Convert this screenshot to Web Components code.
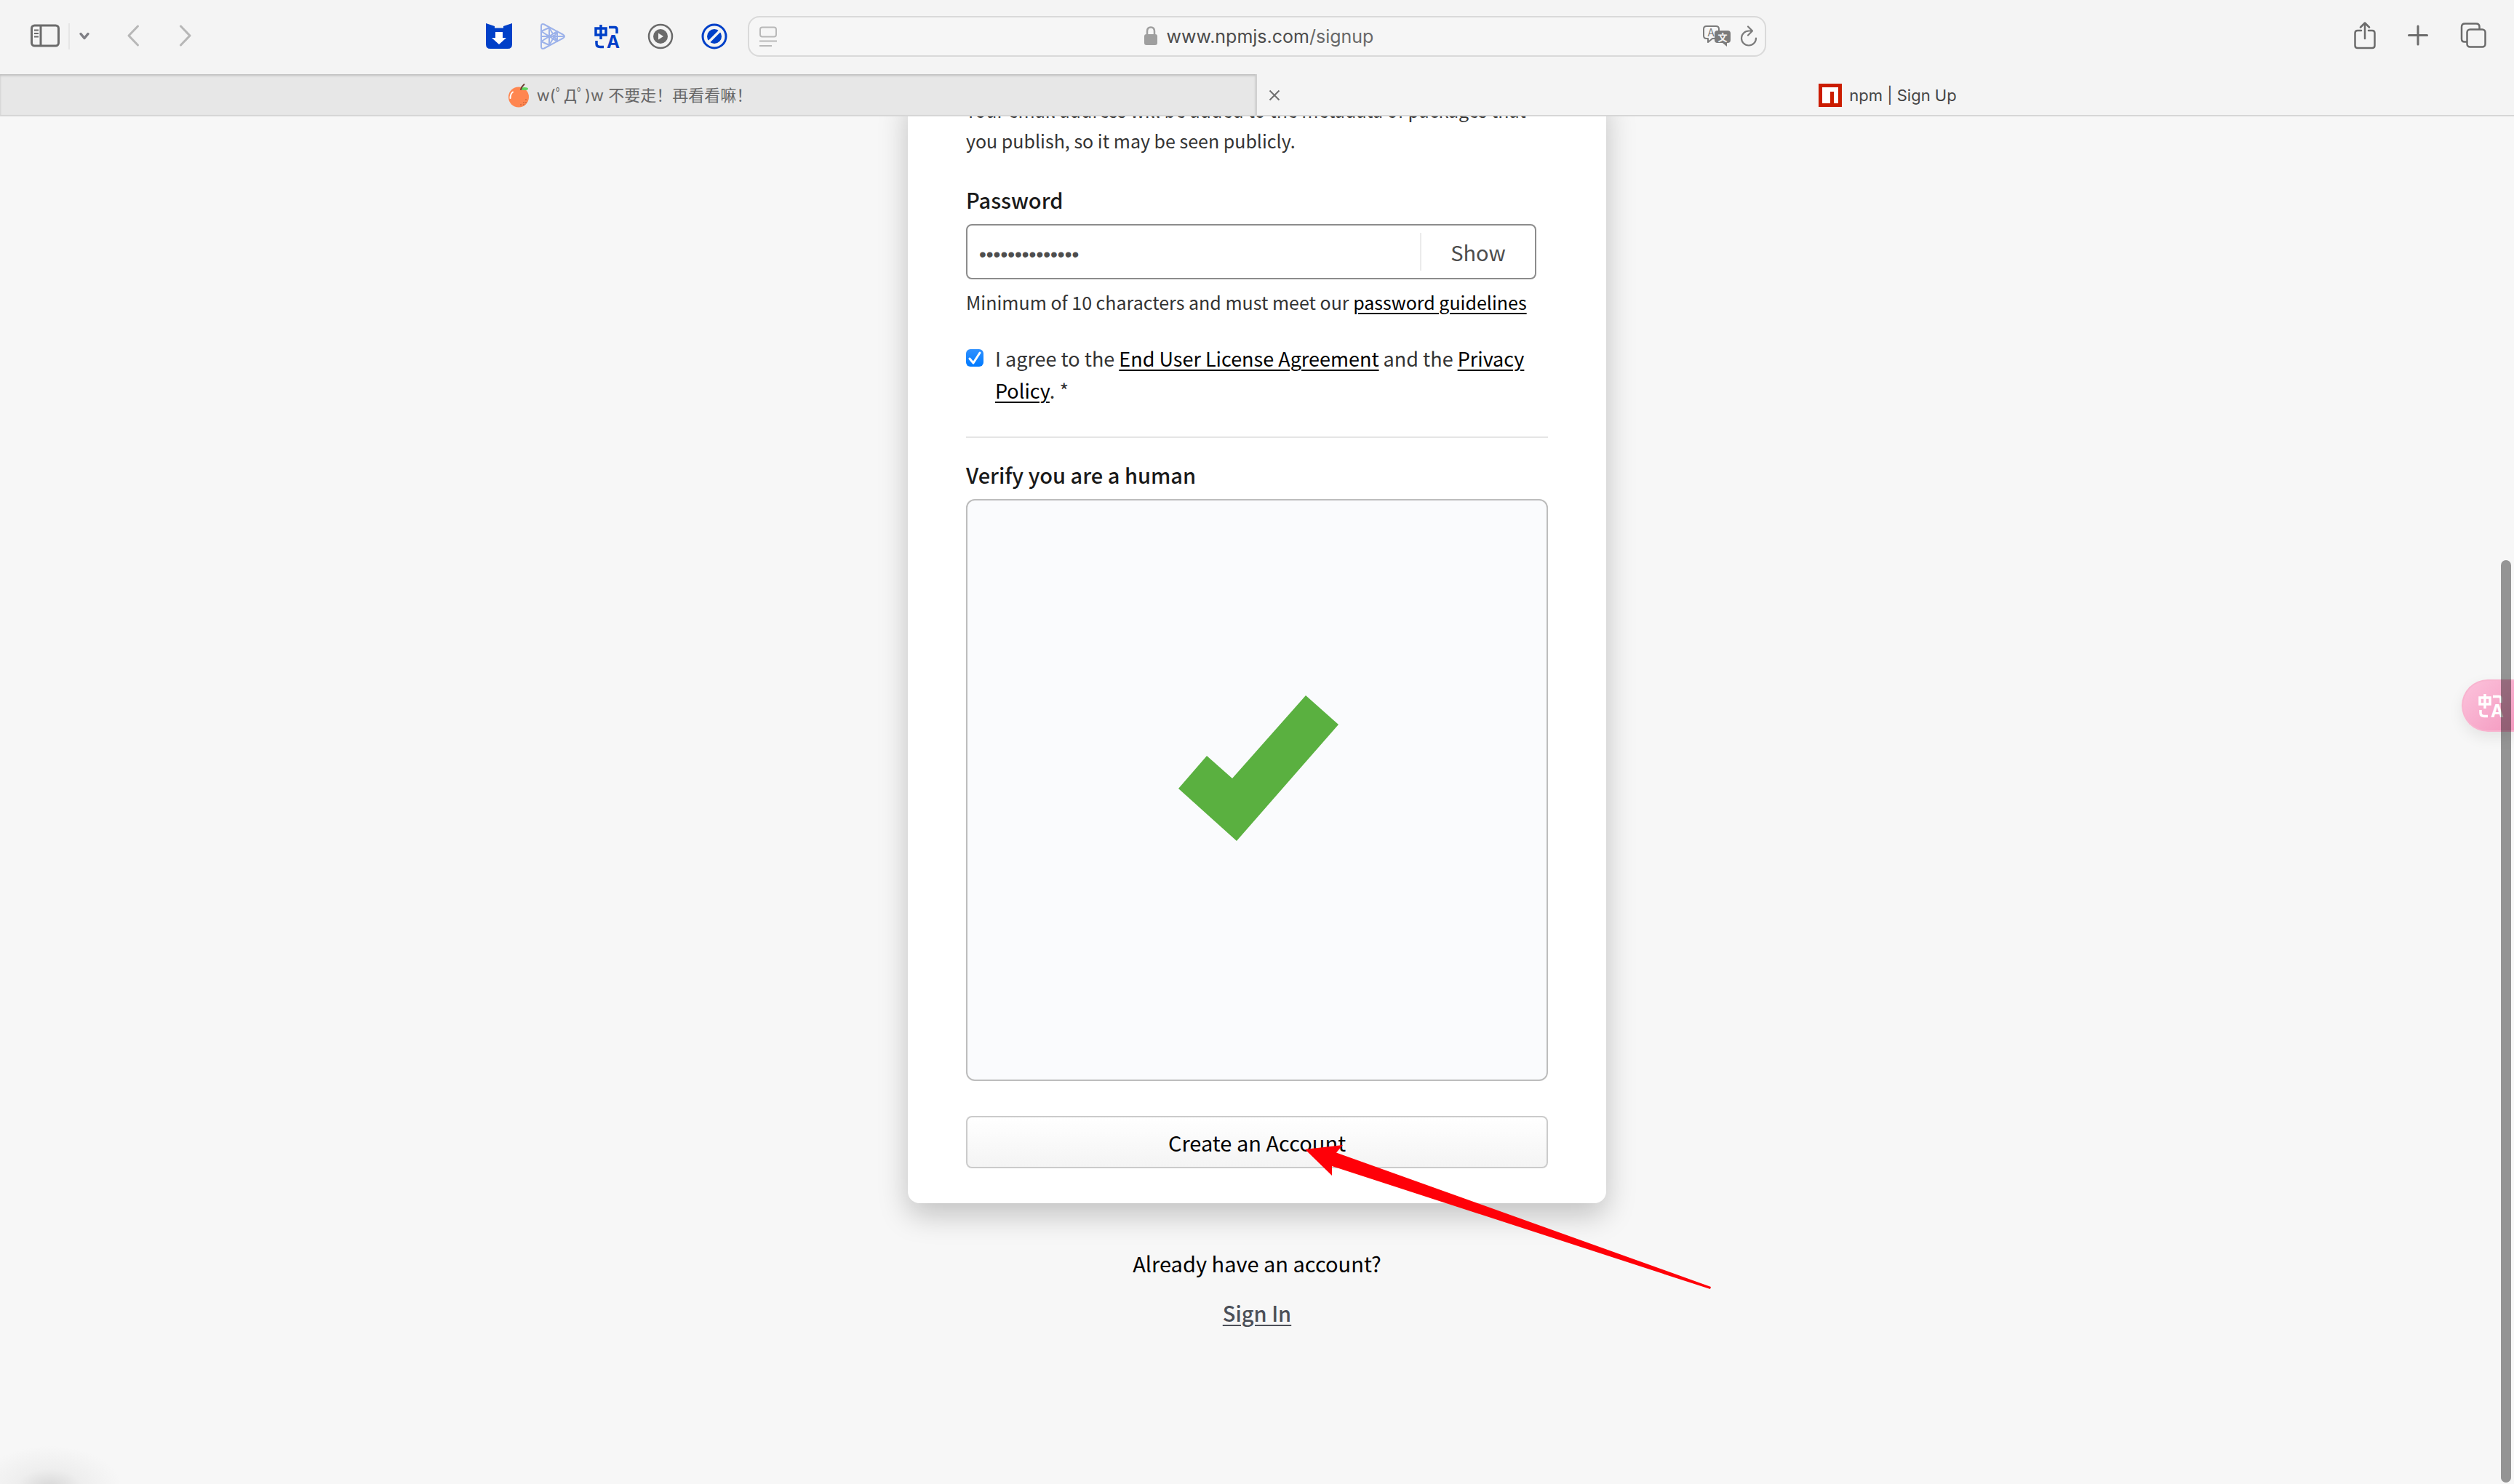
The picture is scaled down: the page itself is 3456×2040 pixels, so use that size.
<!DOCTYPE html>
<html lang="en">
<head>
<meta charset="utf-8">
<title>npm | Sign Up</title>
<style>
html, body { margin: 0; height: 100%; }
body { background: #f7f7f7; font-family: "Noto Sans CJK SC", sans-serif; color: #1a1a1a; overflow: hidden; }
</style>
</head>
<body>
<browser-window>
  <browser-toolbar slot="toolbar"></browser-toolbar>
  <tab-strip slot="tabs">
    <browser-tab><ui-icon slot="icon" name="orange"></ui-icon>w(ﾟДﾟ)w 不要走！再看看嘛！</browser-tab>
    <browser-tab active><ui-icon slot="icon" name="npm"></ui-icon>npm | Sign Up</browser-tab>
  </tab-strip>
  <signup-page></signup-page>
</browser-window>

<script>
const ICONS = {
  sidebar: [40, 40, `<g fill="none" stroke="#6b6b6b" stroke-width="3"><rect x="1.5" y="5" width="37" height="28" rx="4"/><path d="M14 5v28"/><path stroke-width="2" d="M5 11.5h6M5 16h6M5 20.500h6"/></g>`],
  down: [16, 40, `<path d="M3 16.500l5 6 5-6" fill="none" stroke="#7f7f85" stroke-width="3.500" stroke-linecap="round" stroke-linejoin="round"/>`],
  back: [18, 40, `<path d="M15.500 6L3 19l12.500 13" fill="none" stroke="#b7b7b7" stroke-width="3" stroke-linecap="round" stroke-linejoin="round"/>`],
  forward: [18, 40, `<path d="M2.500 6L15 19 2.500 32" fill="none" stroke="#b7b7b7" stroke-width="3" stroke-linecap="round" stroke-linejoin="round"/>`],
  download: [36, 40, `<path d="M0 2l12 4v2.500h12V6l12-4v29q0 6-6 6H6q-6 0-6-6z" fill="#0040c8"/><path d="M13 14h10v8h5L18 31 8 22h5z" fill="#fff"/>`],
  mesh: [36, 40, `<g fill="none" stroke="#9cb2ea" stroke-width="2" stroke-linejoin="round"><path d="M2 6q0-4 4-2.500L32 17.500q4 2.500 0 5L6 36.500Q2 38 2 34z"/><path d="M2 13l11-5v24L2 27M2 13l22 14V13L2 27M13 8l11 19M13 32L24 13M2 20h32"/></g>`],
  translate: [36, 40, `<g fill="none" stroke="currentColor" stroke-width="3.500"><rect x="3" y="9" width="14" height="9"/><path d="M10 4v20"/><path d="M21 7.500h8q3 0 3 3V16M4 26v4q0 4.500 5 4.500h5"/></g><text x="27" y="36" text-anchor="middle" font-family="Inter, sans-serif" font-weight="700" font-size="24" fill="currentColor">A</text>`],
  play: [36, 40, `<g fill="none" stroke="#6a6a6a" stroke-width="2.500"><circle cx="18" cy="20" r="16"/></g><circle cx="18" cy="20" r="10" fill="#6a6a6a"/><path d="M15 15.500v9l7-4.500z" fill="#f4f4f4"/>`],
  block: [36, 40, `<circle cx="18" cy="20" r="16" fill="none" stroke="#0040c8" stroke-width="3"/><circle cx="18" cy="20" r="10" fill="#0040c8"/><path d="M10 28l16-16" stroke="#f4f4f4" stroke-width="3.500"/>`],
  reader: [24, 32, `<g fill="none" stroke="#b8b8b8" stroke-width="2"><rect x="1" y="3.500" width="22" height="13" rx="3"/><path d="M0 22.500h24M0 29h17"/></g>`],
  lock: [20, 32, `<path d="M5 14V9q0-5.500 5-5.500T15 9v5" fill="none" stroke="#9f9f9f" stroke-width="2.500"/><rect x="1" y="13" width="18" height="15" rx="3" fill="#9f9f9f"/>`],
  speech: [38, 32, `<path d="M17 19h-4l-6 5v-5H5q-4 0-4-4V6q0-4 4-4h13q4 0 4 4v2" fill="none" stroke="#7b7b7b" stroke-width="2" stroke-linejoin="round"/><path d="M20 8h14q4 0 4 4v9q0 4-4 4h-1v5l-6-5h-7q-4 0-4-4v-9q0-4 4-4z" fill="#7b7b7b"/><text x="11" y="16" text-anchor="middle" font-family="Inter, sans-serif" font-size="14" fill="#7b7b7b">A</text><text x="27" y="22" text-anchor="middle" font-family="'Noto Sans CJK SC', sans-serif" font-weight="700" font-size="13" fill="#f4f4f4">文</text>`],
  reload: [24, 32, `<g fill="none" stroke="#7b7b7b" stroke-width="2.200" stroke-linecap="round" stroke-linejoin="round"><path d="M22 18.500a10 10 0 1 1-10-10h4.500M11 2.500l6 6-6 6"/></g>`],
  share: [30, 40, `<g fill="none" stroke="#6b6b6b" stroke-width="2.500" stroke-linecap="round" stroke-linejoin="round"><path d="M10 12H5q-3.500 0-3.500 3.500v17Q1.500 36 5 36h20q3.500 0 3.500-3.500v-17Q28.500 12 25 12h-5M15 23V2M9 7.500L15 1.500l6 6"/></g>`],
  plus: [28, 40, `<path d="M1.500 18.500h25M14 6v25" fill="none" stroke="#6b6b6b" stroke-width="3" stroke-linecap="round"/>`],
  overview: [36, 40, `<g fill="none" stroke="#6b6b6b" stroke-width="2.500"><rect x="9.500" y="10.500" width="25" height="24" rx="4"/><path d="M9.500 27.500H6q-4 0-4-4V7q0-4.500 4.500-4.500H22q4.500 0 4.500 4.500v3.500"/></g>`],
  close: [16, 16, `<path d="M1.500 1.500l13 13M14.500 1.500l-13 13" stroke="#6f6f6f" stroke-width="2"/>`],
  npm: [32, 32, `<path fill="#cb1c00" d="M0 0h32v32H0z"/><path fill="#fff" d="M5 5h22v22h-6V11h-5v16H5z"/>`],
  orange: [30, 34, `<ellipse cx="15" cy="19.500" rx="14" ry="14" fill="#ff8650"/><ellipse cx="23" cy="8" rx="5" ry="2" fill="#5fd35b"/><path d="M18 9q1-4 4.500-7" fill="none" stroke="#6b3c32" stroke-width="2" stroke-linecap="round"/><path d="M3.500 21q0-6 3.500-8.500" fill="none" stroke="#fff" stroke-width="2" stroke-linecap="round"/><g fill="#b3522c"><circle cx="18" cy="30" r=".8"/><circle cx="22" cy="27" r=".8"/><circle cx="25" cy="23" r=".8"/><circle cx="22" cy="30" r=".8"/><circle cx="25" cy="27" r=".8"/></g>`],
  tick: [24, 24, `<path d="M5 13l5 6L19 5" fill="none" stroke="#fff" stroke-width="3" stroke-linecap="round" stroke-linejoin="round"/>`],
  success: [224, 260, `<path d="M179 0l45 40L84 200 4 128l39-45 35 31z" fill="#5ab040"/>`],
  arrow: [560, 200, `<path d="M0 7L52 1l-9 10.500L558 196l-1 3L37 30v13z" fill="#ff0008"/>`]
};

const RESET = `
  :host, *, ::before, ::after { box-sizing: border-box; }
  button { margin: 0; padding: 0; border: 0; background: none; font: inherit; color: inherit; display: flex; }
  p { margin: 0; }
  a { text-decoration: underline; text-decoration-thickness: 2px; text-underline-offset: 4px; color: #000; }
`;

function define(name, markup) {
  const template = document.createElement('template');
  template.innerHTML = markup;
  customElements.define(name, class extends HTMLElement {
    constructor() {
      super();
      this.attachShadow({ mode: 'open' }).append(template.content.cloneNode(true));
    }
  });
}

customElements.define('ui-icon', class extends HTMLElement {
  connectedCallback() {
    if (this.shadowRoot) return;
    const [w, h, body] = ICONS[this.getAttribute('name')];
    this.attachShadow({ mode: 'open' }).innerHTML =
      `<style>:host{display:block;flex:none}svg{display:block}</style>
       <svg width="${w}" height="${h}" viewBox="0 0 ${w} ${h}" aria-hidden="true">${body}</svg>`;
  }
});

define('browser-window', `
  <style>${RESET}
    :host { display: flex; flex-direction: column; height: 100vh; }
    header { flex: none; background: #f4f4f4; border-bottom: 2px solid #d6d6d6; position: relative; z-index: 1; }
    main { flex: 1; min-height: 0; }
  </style>
  <header><slot name="toolbar"></slot><slot name="tabs"></slot></header>
  <main><slot></slot></main>`);

define('browser-toolbar', `
  <style>${RESET}
    :host { display: grid; grid-template-columns: 1fr minmax(0, 1400px) 1fr; align-items: center; height: 102px; padding-bottom: 2px; }
    div { display: flex; align-items: center; }
    .left { padding: 0 28px 0 42px; }
    .rule { width: 2px; height: 36px; background: #e6e6e6; margin: 0 12px; }
    .nav { gap: 54px; margin-left: 50px; }
    .extensions { gap: 38px; margin-left: auto; color: #0040c8; }
    .right { justify-content: flex-end; gap: 44px; padding-right: 38px; }
  </style>
  <div class="left">
    <button aria-label="Show sidebar"><ui-icon name="sidebar"></ui-icon></button>
    <div class="rule"></div>
    <button aria-label="Tab groups"><ui-icon name="down"></ui-icon></button>
    <div class="nav">
      <button aria-label="Back"><ui-icon name="back"></ui-icon></button>
      <button aria-label="Forward"><ui-icon name="forward"></ui-icon></button>
    </div>
    <div class="extensions">
      <button aria-label="Downloader"><ui-icon name="download"></ui-icon></button>
      <button aria-label="Media"><ui-icon name="mesh"></ui-icon></button>
      <button aria-label="Translate"><ui-icon name="translate"></ui-icon></button>
      <button aria-label="Player"><ui-icon name="play"></ui-icon></button>
      <button aria-label="Blocker"><ui-icon name="block"></ui-icon></button>
    </div>
  </div>
  <address-bar></address-bar>
  <div class="right">
    <button aria-label="Share"><ui-icon name="share"></ui-icon></button>
    <button aria-label="New tab"><ui-icon name="plus"></ui-icon></button>
    <button aria-label="Tab overview"><ui-icon name="overview"></ui-icon></button>
  </div>`);

define('address-bar', `
  <style>${RESET}
    :host { display: grid; grid-template-columns: 1fr auto 1fr; align-items: center; height: 56px;
            padding: 0 10px 0 14px; border: 2px solid #d9d9d9; border-radius: 16px; background: #f6f6f6; }
    .url { align-items: center; gap: 12px; font: 25px/32px Inter, sans-serif; color: #4c4c4c; }
    .path { color: #686868; }
    .tools { display: flex; justify-content: flex-end; gap: 13px; }
  </style>
  <button aria-label="Reader"><ui-icon name="reader"></ui-icon></button>
  <button class="url"><ui-icon name="lock"></ui-icon><span>www.npmjs.com<span class="path">/signup</span></span></button>
  <div class="tools">
    <button aria-label="Translate page"><ui-icon name="speech"></ui-icon></button>
    <button aria-label="Reload"><ui-icon name="reload"></ui-icon></button>
  </div>`);

define('tab-strip', `
  <style>
    :host { display: grid; grid-template-columns: 1fr 1fr; height: 56px; }
  </style>
  <slot></slot>`);

define('browser-tab', `
  <style>${RESET}
    :host { display: grid; grid-template-columns: 1fr auto 1fr; align-items: center; padding: 2px 10px 0 16px;
            font: 22px/32px Inter, "Noto Sans CJK SC", sans-serif; color: #686868; white-space: nowrap;
            background: #e7e7e7; border-right: 2px solid #d0d0d0; box-shadow: inset 0 2px 3px #bdbdbd; }
    :host([active]) { background: none; border: 0; color: #454545; box-shadow: none; }
    :host(:not([active])) .close { visibility: hidden; }
    .title { display: flex; align-items: center; gap: 10px; }
  </style>
  <button class="close" aria-label="Close tab"><ui-icon name="close"></ui-icon></button>
  <div class="title"><slot name="icon"></slot><span><slot></slot></span></div>`);

define('signup-page', `
  <style>${RESET}
    :host { display: flex; flex-direction: column; align-items: center; height: 100%; position: relative; overflow: hidden; background: #f7f7f7; }
    footer { display: flex; flex-direction: column; align-items: center; gap: 28px; margin-top: 62px; font-size: 29px; line-height: 40px; color: #000; }
    footer a { color: #4b4f58; font-weight: 500; }
    .status { position: absolute; left: 0; bottom: 0; width: 180px; height: 56px;
              background: radial-gradient(100px 58px at 68px 110%, #d6d6d6, #eeeeee 45%, #f7f7f7); }
  </style>
  <signup-card></signup-card>
  <footer><p>Already have an account?</p><a href="#signin">Sign In</a></footer>
  <div class="status"></div>
  <translate-pill></translate-pill>
  <page-scrollbar></page-scrollbar>`);

define('signup-card', `
  <style>${RESET}
    :host { display: block; width: 100%; max-width: 960px; padding: 0 80px 48px; margin-top: -30px; background: #fff;
            border-radius: 0 0 16px 16px; box-shadow: 0 16px 40px rgba(0, 0, 0, .22); }
    .hint { font-size: 25px; line-height: 42px; color: #333; }
    password-field { margin-top: 40px; }
    .rules { margin-top: 10px; }
    agree-terms { margin-top: 35px; }
    hr { margin: 41px 0 30px; border: 0; height: 2px; background: #e5e5e5; }
    .submit { position: relative; margin-top: 48px; }
    .submit button { width: 100%; height: 72px; justify-content: center; align-items: center; font-size: 29px; line-height: 40px; color: #000;
             border: 2px solid #cbcbcb; border-radius: 8px; background: linear-gradient(#fff, #f4f4f4); background-clip: padding-box; }
    .pointer { position: absolute; left: 466px; top: 39px; }
  </style>
  <p class="hint">Your email address will be added to the metadata of packages that<br>you publish, so it may be seen publicly.</p>
  <password-field></password-field>
  <p class="hint rules">Minimum of 10 characters and must meet our <a href="#guidelines">password guidelines</a></p>
  <agree-terms></agree-terms>
  <hr>
  <human-check>Verify you are a human</human-check>
  <div class="submit"><button type="submit">Create an Account</button><ui-icon class="pointer" name="arrow"></ui-icon></div>`);

define('password-field', `
  <style>${RESET}
    :host { display: block; }
    label { display: block; font-size: 29px; line-height: 40px; font-weight: 500; margin-bottom: 14px; }
    .box { display: flex; align-items: center; height: 76px; margin-right: 16px; border: 2px solid #8c8c8c; border-radius: 8px; }
    input { flex: 1; min-width: 0; height: 72px; border: 0; outline: 0; background: none; padding: 8px 16px 0; color: #4d4d4d; font: 28px "Liberation Sans", sans-serif; }
    button { width: 158px; height: 52px; align-items: center; justify-content: center; border-left: 2px solid #ebebeb; font-size: 29px; line-height: 40px; color: #4d4d4d; }
  </style>
  <label for="password">Password</label>
  <div class="box"><input id="password" type="password" value="abcdefghijklmn"><button type="button">Show</button></div>`);

define('agree-terms', `
  <style>${RESET}
    :host { display: flex; align-items: flex-start; gap: 16px; }
    .box { display: grid; flex: none; margin-top: 9px; }
    .box > * { grid-area: 1 / 1; }
    input { appearance: none; margin: 0; width: 24px; height: 24px; border-radius: 6px; background: linear-gradient(#2e90ff, #007aff); }
    ui-icon { pointer-events: none; }
    label { font-size: 27px; line-height: 44px; color: #333; }
  </style>
  <span class="box"><input id="agree" type="checkbox" checked><ui-icon name="tick"></ui-icon></span>
  <label for="agree">I agree to the <a href="#eula">End User License Agreement</a> and the <a href="#privacy">Privacy Policy</a>. *</label>`);

define('human-check', `
  <style>${RESET}
    :host { display: block; }
    h2 { margin: 0 0 14px; font-size: 29px; line-height: 40px; font-weight: 500; }
    .panel { display: flex; align-items: center; justify-content: center; aspect-ratio: 1; border: 2px solid #bdbdbd; border-radius: 12px; background: #fafbfd; }
  </style>
  <h2><slot></slot></h2>
  <div class="panel"><ui-icon name="success"></ui-icon></div>`);

define('translate-pill', `
  <style>${RESET}
    :host { position: absolute; right: 0; top: 774px; }
    button { width: 72px; height: 72px; padding-left: 20px; align-items: center; color: #fff; border-radius: 36px 0 0 36px;
             background: linear-gradient(135deg, #fcc3dc, #f49ac0); border: 2px solid #f8b4cf; border-right: 0; box-shadow: 0 8px 20px rgba(0, 0, 0, .08); }
  </style>
  <button aria-label="Translate"><ui-icon name="translate"></ui-icon></button>`);

define('page-scrollbar', `
  <style>
    :host { position: absolute; right: 4px; top: 610px; bottom: 2px; width: 14px; border-radius: 7px; background: rgba(0, 0, 0, .4); }
  </style>`);
</script>
</body>
</html>
